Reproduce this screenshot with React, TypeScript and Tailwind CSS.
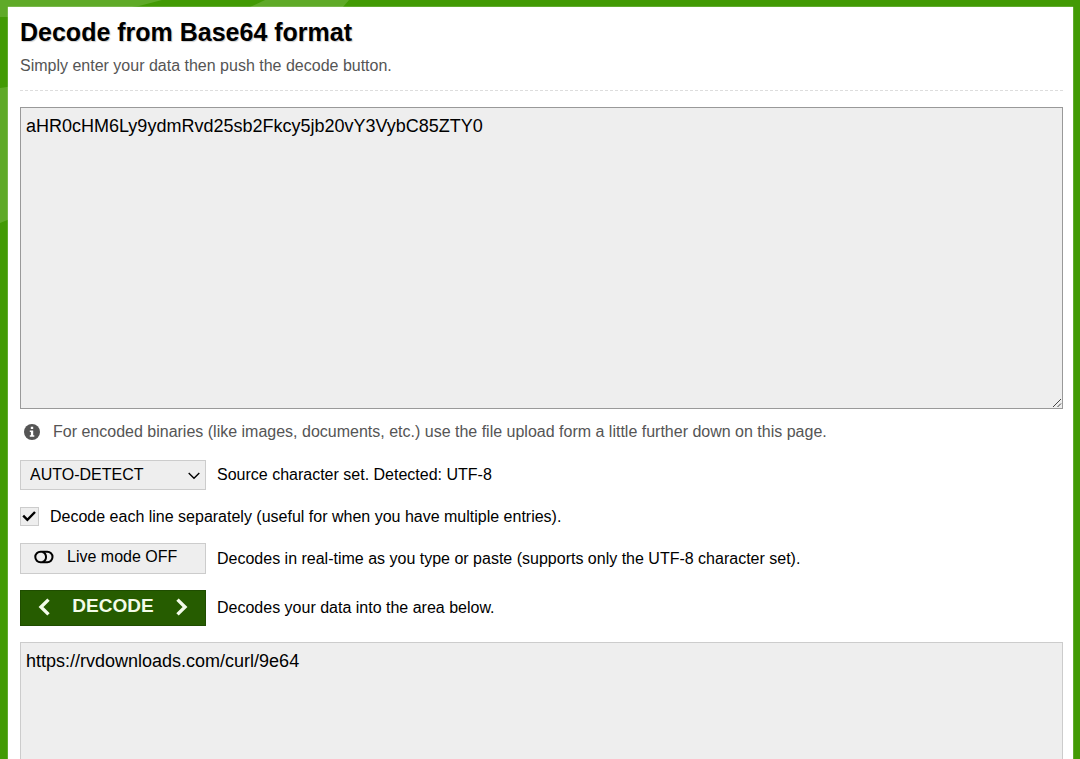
import { useState } from 'react';

const decodeLine = (line: string) => {
  try {
    return atob(line.trim());
  } catch {
    return line;
  }
};

function Backdrop() {
  return (
    <svg className="absolute inset-0 h-full w-full" aria-hidden="true">
      <path d="M0 0H162L139 6L60 17H0Z" fill="#5faa28" />
      <path d="M265 0H349L343 7L320 20H240L250 7Z" fill="#5faa28" />
      <path d="M0 88L20 85V215L0 223Z" fill="#5faa28" />
    </svg>
  );
}

function InfoIcon() {
  return (
    <svg viewBox="0 0 16 16" className="h-4 w-4" aria-hidden="true">
      <circle cx="8" cy="8" r="8" fill="#555" />
      <path d="M6.8 2.7H9.2V5H6.8ZM5.8 6.4H9.2V11.3H10.3V12.8H5.8V11.3H6.9V7.9H5.8Z" fill="#fff" />
    </svg>
  );
}

function ToggleIcon({ on }: { on: boolean }) {
  return (
    <svg viewBox="0 0 20 14" className={on ? 'h-[14px] w-5 -scale-x-100' : 'h-[14px] w-5'} fill="none" stroke="currentColor" strokeWidth="2" aria-hidden="true">
      <rect x="1.3" y="1.8" width="17.2" height="10.4" rx="5.2" />
      <path d="M8.5 2C13.2 3.6 13.2 10.4 8.5 12" />
    </svg>
  );
}

function Chevron({ left = false }: { left?: boolean }) {
  return (
    <svg viewBox="0 0 12 18" className="h-[18px] w-3" fill="none" stroke="currentColor" strokeWidth="3.4" aria-hidden="true">
      <path d={left ? 'M10.5 1.6L3 9L10.5 16.4' : 'M1.5 1.6L9 9L1.5 16.4'} />
    </svg>
  );
}

export default function App() {
  const [source, setSource] = useState('aHR0cHM6Ly9ydmRvd25sb2Fkcy5jb20vY3VybC85ZTY0');
  const [result, setResult] = useState('https://rvdownloads.com/curl/9e64');
  const [charset, setCharset] = useState('AUTO-DETECT');
  const [separate, setSeparate] = useState(true);
  const [live, setLive] = useState(false);

  const decode = (text: string) => {
    setResult(separate ? text.split('\n').map(decodeLine).join('\n') : decodeLine(text));
  };

  const handleSource = (text: string) => {
    setSource(text);
    if (live) decode(text);
  };

  return (
    <div className="relative h-screen overflow-hidden bg-[#429a04] pt-[7px] pr-[7px] pl-2 font-['Liberation_Sans',Arial,sans-serif] text-base text-black">
      <Backdrop />
      <main className="relative bg-white pt-[11px] pr-[10px] pb-6 pl-3 shadow-[0_0_1px_#fff]">
        <header className="border-b border-dashed border-[#ddd] pb-3">
          <h1 className="text-[25px] leading-7 font-bold [text-shadow:1px_1px_1px_#ccc]">Decode from Base64 format</h1>
          <p className="mt-2 leading-6 text-[#555]">Simply enter your data then push the decode button.</p>
        </header>

        <div className="relative mt-4">
          <textarea
            aria-label="Base64 data"
            value={source}
            onChange={(e) => handleSource(e.target.value)}
            spellCheck={false}
            className="block h-[302px] w-full resize-y border border-[#999] bg-[#eee] px-[5px] py-2 text-lg leading-5 outline-none [&::-webkit-resizer]:hidden"
          />
          <svg viewBox="0 0 10 10" className="pointer-events-none absolute right-px bottom-px h-[10px] w-[10px]" stroke="#444" aria-hidden="true">
            <path d="M1 9L9 1M5.5 9L9 5.5" />
          </svg>
        </div>

        <p className="mt-[11px] flex items-center gap-[13px] pl-1 leading-6 text-[#555]">
          <InfoIcon />
          For encoded binaries (like images, documents, etc.) use the file upload form a little further down on this page.
        </p>

        <div className="mt-4 flex items-center gap-[11px]">
          <div className="relative w-[186px]">
            <select
              id="charset"
              value={charset}
              onChange={(e) => setCharset(e.target.value)}
              className="block h-[30px] w-full appearance-none border border-[#ccc] bg-[#eee] pl-[9px] text-base"
            >
              <option>AUTO-DETECT</option>
              <option>UTF-8</option>
              <option>ASCII</option>
              <option>ISO-8859-1</option>
            </select>
            <svg viewBox="0 0 12 8" className="pointer-events-none absolute top-3 right-[6px] h-2 w-3" fill="none" stroke="#000" strokeWidth="1.4" aria-hidden="true">
              <path d="M0.7 1L6 6.3L11.3 1" />
            </svg>
          </div>
          <label htmlFor="charset">Source character set. Detected: UTF-8</label>
        </div>

        <label className="mt-4 flex items-center gap-[11px] leading-[21px]">
          <span className="relative h-[19px] w-[19px]">
            <input
              type="checkbox"
              checked={separate}
              onChange={(e) => setSeparate(e.target.checked)}
              className="peer block h-full w-full appearance-none border border-[#ccc] bg-[#eee]"
            />
            <svg viewBox="0 0 19 19" className="pointer-events-none absolute inset-0 hidden peer-checked:block" fill="none" stroke="#000" strokeWidth="2.4" aria-hidden="true">
              <path d="M3.2 8.6L7.4 12.8L15 5" />
            </svg>
          </span>
          Decode each line separately (useful for when you have multiple entries).
        </label>

        <div className="mt-4 flex items-center gap-[11px]">
          <button
            id="live"
            type="button"
            aria-pressed={live}
            onClick={() => setLive(!live)}
            className="flex h-[31px] w-[186px] items-center gap-[13px] border border-[#ccc] bg-[#eee] pb-[3px] pl-[13px]"
          >
            <ToggleIcon on={live} />
            {live ? 'Live mode ON' : 'Live mode OFF'}
          </button>
          <label htmlFor="live">Decodes in real-time as you type or paste (supports only the UTF-8 character set).</label>
        </div>

        <div className="mt-4 flex items-center gap-[11px]">
          <button
            id="decode"
            type="button"
            onClick={() => decode(source)}
            className="flex h-9 w-[186px] items-center justify-between border border-[#1f4d00] bg-[#265c00] px-[17px] pb-[3px] text-[19px] font-bold text-[#f3fbe9]"
          >
            <Chevron left />
            DECODE
            <Chevron />
          </button>
          <label htmlFor="decode">Decodes your data into the area below.</label>
        </div>

        <textarea
          aria-label="Decoded result"
          readOnly
          value={result}
          className="mt-4 block h-[302px] w-full resize-none border border-[#ccc] bg-[#eee] px-[5px] py-2 text-lg leading-5 outline-none"
        />
      </main>
    </div>
  );
}
